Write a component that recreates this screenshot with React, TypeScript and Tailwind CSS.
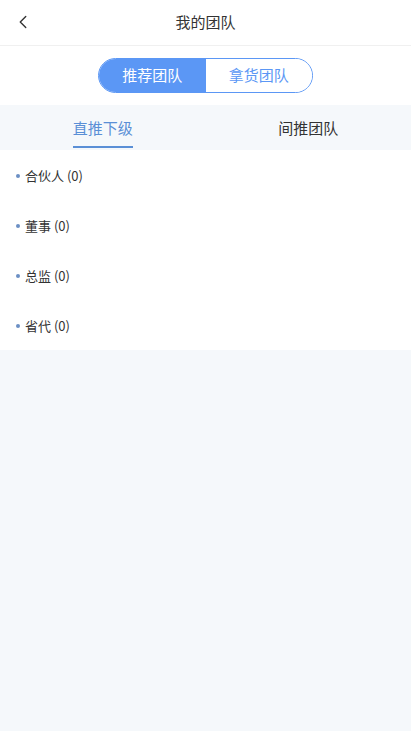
import { ChevronLeft } from "lucide-react";

const FONT = { fontFamily: '"Noto Sans CJK SC", "Noto Sans", sans-serif' };
const ROLES = ["合伙人", "董事", "总监", "省代"];

export default function App() {
  return (
    <div className="min-h-[731px] w-[411px] bg-[#f5f8fb] text-[#333]" style={FONT}>
      {/* header */}
      <div className="relative h-[46px] bg-white border-b border-[#f0f0f0] flex items-center justify-center">
        <ChevronLeft className="absolute left-[12px] top-[11px] w-[22px] h-[22px] text-[#333]" strokeWidth={1.5} />
        <span className="text-[15px] text-[#333]">我的团队</span>
      </div>

      {/* segmented switch */}
      <div className="bg-white h-[59px] flex justify-center pt-[12px]">
        <div className="flex h-[35px] w-[215px] rounded-full border border-[#5b97f5] overflow-hidden text-[15px]">
          <div className="flex-1 bg-[#5b97f5] text-white flex items-center justify-center">推荐团队</div>
          <div className="flex-1 bg-white text-[#5b97f5] flex items-center justify-center">拿货团队</div>
        </div>
      </div>

      {/* tabs */}
      <div className="h-[45px] bg-[#f5f8fb] flex text-[15px]">
        <div className="flex-1 flex flex-col items-center justify-end">
          <span className="text-[#5a8fd6] leading-[20px]">直推下级</span>
          <div className="mt-[8px] mb-[2px] w-[60px] h-[2px] bg-[#5a8fd6]" />
        </div>
        <div className="flex-1 flex flex-col items-center justify-end">
          <span className="text-[#333] leading-[20px]">间推团队</span>
          <div className="mt-[8px] mb-[2px] w-[60px] h-[2px]" />
        </div>
      </div>

      {/* list */}
      <div className="bg-white">
        {ROLES.map((r) => (
          <div key={r} className="h-[50px] flex items-center pt-[2px] pl-[16px] text-[13px] text-[#333]">
            <span className="w-[4px] h-[4px] rounded-full bg-[#6b8fc4] mr-[5px]" />
            {r} (0)
          </div>
        ))}
      </div>
    </div>
  );
}
